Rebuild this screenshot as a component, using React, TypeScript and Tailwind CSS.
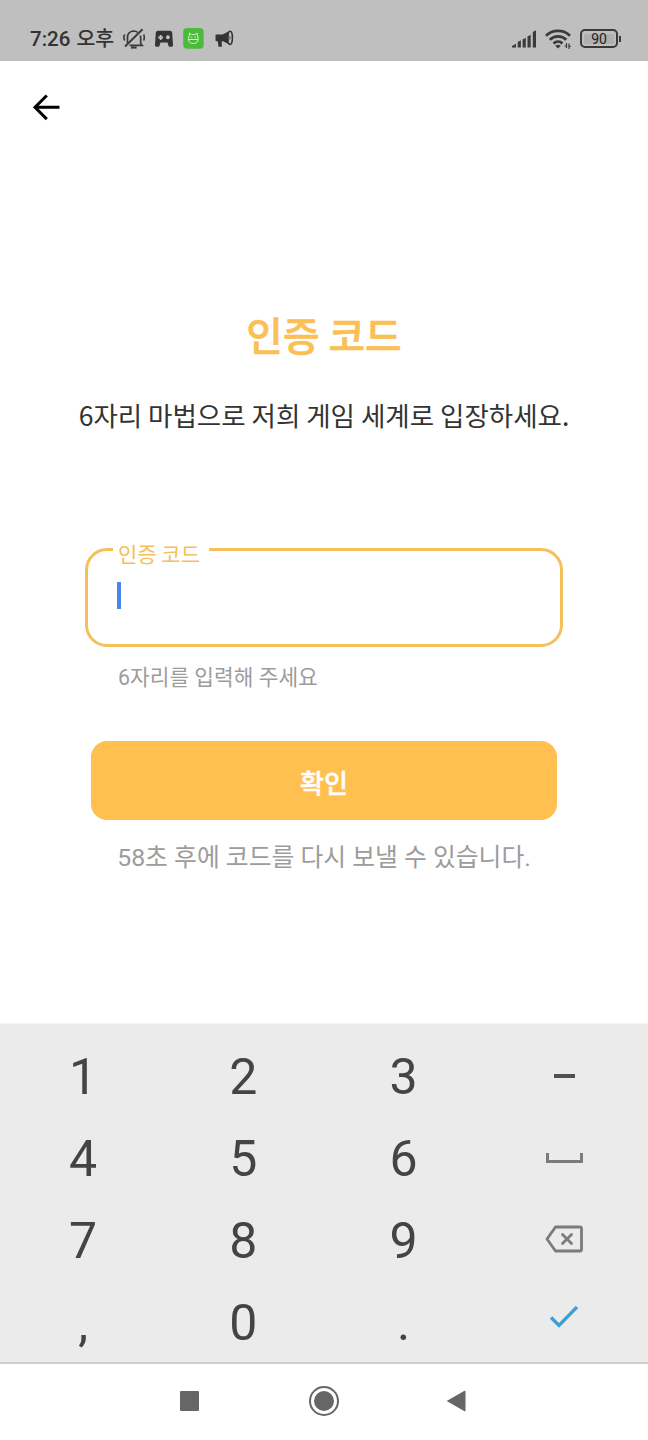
import React from "react";

const hangul = "font-['Roboto','Noto_Sans_CJK_KR',sans-serif]";
const noto = "font-['Noto_Sans_CJK_KR',sans-serif]";

function BellOffIcon() {
  return (
    <svg width="22" height="22" viewBox="0 0 22 22" fill="none" stroke="#3a3a3a" strokeWidth="1.700">
      <path d="M4.500 15V9.500C4.500 5.800 7 3.300 10.500 3c2 0 3.300.5 4.300 1.500M17.300 7.500c.3.800.4 1.600.4 2.800v5.200l1.500 1.900H6.500" />
      <path d="M2 18.500 19.500 1.300" strokeWidth="1.900" />
      <path d="M8 19.500h5.600" strokeWidth="2.200" />
      <path d="M1.700 6.500q-1.600 3 0 6M20.700 6.500q1.200 3 0 6" strokeWidth="1.600" />
    </svg>
  );
}

function GamepadIcon() {
  return (
    <svg width="20" height="18" viewBox="0 0 20 18">
      <path
        fill="#333"
        fillRule="evenodd"
        d="M4 .8h12q2 0 2.200 2L19 15q.1 1.700-1.500 1.700h-1.700q-1 0-1.300-1L13.500 12.500h-7L5.500 15.700q-.3 1-1.300 1H2.500Q.9 16.700 1 15L1.800 2.800q.2-2 2.200-2ZM5.700 5v1.500H4.200v1.900h1.500v1.500h1.900V8.400h1.500V6.500H7.600V5ZM13.900 5.200a2 2 0 1 0 .01 0Z"
      />
    </svg>
  );
}

function CatIcon() {
  return (
    <svg width="21" height="21" viewBox="0 0 21 21">
      <rect width="20.500" height="20.700" x=".2" rx="4" fill="#4cba3a" />
      <g fill="none" stroke="#d5f2c9" strokeWidth="1">
        <path d="M6.300 8 6.500 5l2 1.500h3.600l2-1.500.3 3c1 1.200 1.200 3.500.4 5-.8 1.700-2.400 2.500-4.500 2.500s-3.800-.8-4.500-2.500c-.7-1.600-.5-3.800.5-5Z" />
        <path d="M5.600 11.500h9.600M7.800 9.200h1.500M11.500 9.200H13" />
      </g>
    </svg>
  );
}

function MegaphoneIcon() {
  return (
    <svg width="19" height="18" viewBox="0 0 19 18" fill="#333">
      <path d="M.5 5.500Q.5 4.500 1.500 4.500H7.500L13.500 1.500V14L8 11.200H6.800V16.700H3.500L2.800 11.200H1.500Q.5 11.200.5 10.200Z" />
      <ellipse cx="15" cy="7.800" rx="2.400" ry="6.600" fill="none" stroke="#333" strokeWidth="1.600" />
      <path d="M14.500 5.500q2 2.300 0 4.600Z" />
    </svg>
  );
}

function SignalIcon() {
  return (
    <svg width="26" height="18" viewBox="0 0 26 18" fill="#3a3a3a">
      <path d="M0 17.500v-1.500l4-2.200v3.700ZM5.700 17.500v-5.500l3.200-1.700v7.200ZM10.600 17.500v-8l3.200-1.700v9.700ZM15.500 17.500V6.500l3.200-1.700v12.700ZM20.800 17.500V2L24 .3v17.200Z" />
    </svg>
  );
}

function WifiIcon() {
  return (
    <svg width="26" height="20" viewBox="0 0 26 20" fill="none" stroke="#3a3a3a" strokeWidth="2.700">
      <path d="M1 6.800C7.500.3 18.500.3 25 6.800M4.800 10.800c4.500-4.600 12-4.600 16.500 0M8.500 14.500c2.700-2.600 6.400-2.600 9 0" />
      <path fill="#3a3a3a" stroke="none" d="M10.200 16.800q2.800-2.200 5.600 0L13 19.500Z" />
      <path d="M21.500 14v5M24 14.500V20M19.500 17h2M24 17.300h1.700" strokeWidth="1.200" />
    </svg>
  );
}

function Battery() {
  return (
    <div className="flex items-center">
      <div className="flex h-[19px] w-[38px] items-center justify-center rounded-[5px] border-[2.5px] border-[#3a3a3a] p-[2px]">
        <span className="flex h-[10px] w-full items-center justify-center bg-[#b0b0b0] text-[14px] leading-none text-[#222]">
          90
        </span>
      </div>
      <div className="ml-px h-[6px] w-[2px] bg-[#3a3a3a]" />
    </div>
  );
}

function StatusBar() {
  return (
    <div className="flex h-[61px] items-start justify-between bg-[#bfbfbf] pl-[30px] pr-[27px] pt-[28px]">
      <div className="flex h-[21px] items-center">
        <span className="w-[93px] whitespace-nowrap pt-[2px] text-[20.500px] font-medium leading-[21px] text-[#333] [word-spacing:1px]">
          7:26 오후
        </span>
        <BellOffIcon />
        <span className="ml-[9px]"><GamepadIcon /></span>
        <span className="ml-[9px]"><CatIcon /></span>
        <span className="ml-[11px]"><MegaphoneIcon /></span>
      </div>
      <div className="flex h-[21px] items-center">
        <SignalIcon />
        <span className="ml-[7px] mr-[9px]"><WifiIcon /></span>
        <Battery />
      </div>
    </div>
  );
}

function Key({ children }: { children: React.ReactNode }) {
  return (
    <button className="flex h-[82px] items-center justify-center text-[50px] leading-none text-[#444]">
      {children}
    </button>
  );
}

function Keypad() {
  return (
    <div className="grid h-[341px] grid-cols-4 content-start border-b-2 border-t border-b-[#d0d0d0] border-t-[#f4f4f4] bg-[#ebebeb] pl-[3px] pr-[4px] pt-[12px]">
      <Key>1</Key>
      <Key>2</Key>
      <Key>3</Key>
      <Key>
        <span className="mb-[3px] ml-px h-[4px] w-[21px] bg-[#505050]" />
      </Key>
      <Key>4</Key>
      <Key>5</Key>
      <Key>6</Key>
      <Key>
        <span className="mb-[3px] ml-px h-[10px] w-[37px] border-[3px] border-t-0 border-[#7b7b7b]" />
      </Key>
      <Key>7</Key>
      <Key>8</Key>
      <Key>9</Key>
      <Key>
        <svg className="mb-[5px]" width="38" height="28" viewBox="0 0 38 28" fill="none" stroke="#7b7b7b" strokeWidth="2.800" strokeLinejoin="round">
          <path d="M10.500 2H35q1.500 0 1.500 1.500v21q0 1.500-1.500 1.500H10.500L2 14Z" />
          <path d="m17.500 9.500 9 9m0-9-9 9" strokeLinecap="round" />
        </svg>
      </Key>
      <Key>,</Key>
      <Key>0</Key>
      <Key>.</Key>
      <Key>
        <svg className="mb-[12px]" width="30" height="24" viewBox="0 0 30 24" fill="none" stroke="#3b9fd8" strokeWidth="3.300">
          <path d="m2 12.500 8 8L28 2" />
        </svg>
      </Key>
    </div>
  );
}

function NavigationBar() {
  return (
    <div className="flex h-[76px] items-start bg-white pl-[180px] pt-[22px]">
      <div className="mt-[5px] h-[20px] w-[19px] rounded-[1px] bg-[#666]" />
      <div className="ml-[110px] flex size-[30px] items-center justify-center rounded-full border-2 border-[#666]">
        <div className="size-[20px] rounded-full bg-[#666]" />
      </div>
      <svg className="ml-[107px] mt-[4px]" width="20" height="22" viewBox="0 0 20 22">
        <path d="M1.500 11 19 1v20Z" fill="#666" stroke="#666" strokeLinejoin="round" />
      </svg>
    </div>
  );
}

export default function App() {
  return (
    <div className={`flex h-[1440px] w-[648px] flex-col overflow-hidden bg-white ${hangul}`}>
      <StatusBar />
      <main className="flex flex-1 flex-col">
        <button className="ml-[32px] mt-[32px] size-[28px]">
          <svg width="28" height="28" viewBox="0 0 28 28" fill="none" stroke="#000" strokeWidth="3">
            <path d="M27.500 14.300H3M14.800 2.500 3 14.300l11.800 11.800" />
          </svg>
        </button>
        <h1 className={`mt-[183px] text-center text-[39.800px] font-medium leading-[60px] text-[#fbc055] [-webkit-text-stroke:0.6px_#fbc055] ${noto}`}>
          인증 코드
        </h1>
        <p className={`mt-[31px] whitespace-nowrap text-center text-[26.500px] leading-[40px] text-[#333] ${noto}`}>
          6자리 마법으로 저희 게임 세계로 입장하세요.
        </p>
        <fieldset className="mx-[85px] mt-[99px] h-[113px] rounded-[22px] border-[3px] border-[#f5c05a] pl-[25px]">
          <legend className={`h-[30px] w-[96px] pl-[5px] pt-[4px] text-[21px] leading-[30px] text-[#f5c05a] ${noto}`}>
            인증 코드
          </legend>
          <div className="ml-[4px] mt-[18px] h-[27px] w-[4px] bg-[#4a86e8]" />
        </fieldset>
        <p className="ml-[118px] mt-[16px] whitespace-nowrap text-[21.400px] leading-[30px] text-[#9c9c9c]">
          6자리를 입력해 주세요
        </p>
        <button className="mx-[91px] mt-[48px] h-[79px] rounded-[16px] bg-[#ffc04f] pt-[8px] text-[26px] font-medium text-white [-webkit-text-stroke:0.5px_white]">
          확인
        </button>
        <p className="mt-[18px] whitespace-nowrap text-center text-[24.800px] leading-[40px] text-[#9c9c9c]">
          58초 후에 코드를 다시 보낼 수 있습니다.
        </p>
      </main>
      <Keypad />
      <NavigationBar />
    </div>
  );
}
